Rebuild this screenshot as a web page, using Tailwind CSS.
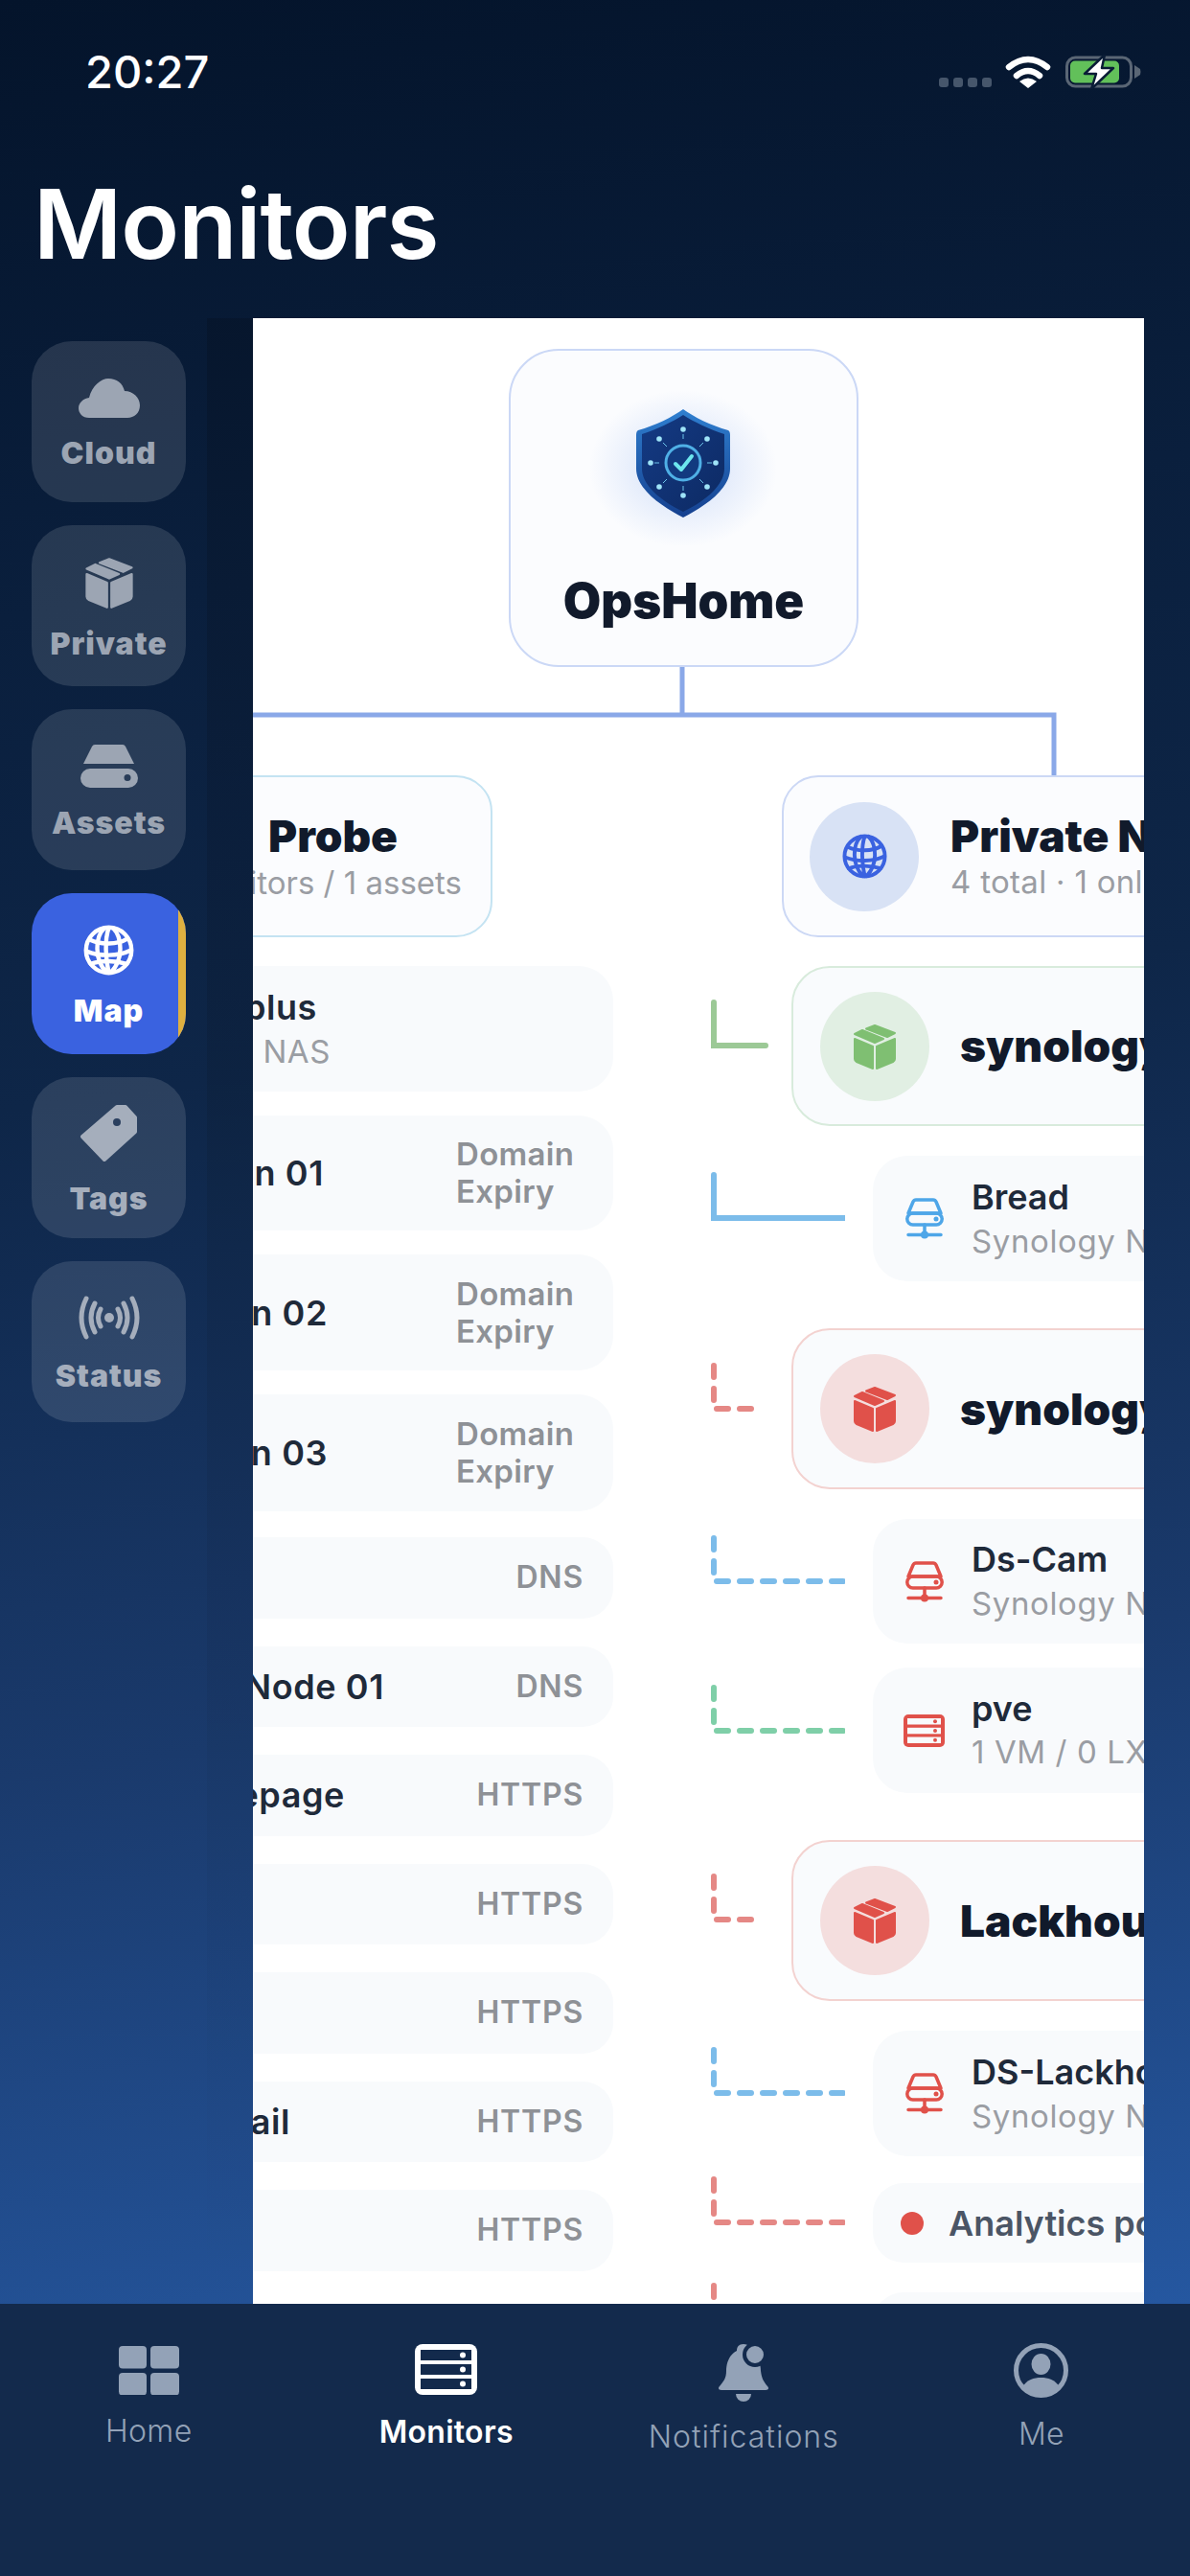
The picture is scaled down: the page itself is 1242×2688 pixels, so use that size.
<!DOCTYPE html>
<html lang="en">
<head>
  <meta charset="UTF-8" />
  <meta name="viewport" content="width=device-width, initial-scale=1.0"/>
  <title>Monitors</title>
  <script src="https://cdn.jsdelivr.net/npm/@tailwindcss/browser@4"></script>
</head>
<body class="w-[1242px] h-[2688px] overflow-hidden flex flex-col bg-[#132a4c] [font-family:Inter,sans-serif]">

  <!-- shared icons -->
  <svg class="hidden">
    <symbol id="box" viewBox="0 0 48 50">
      <g fill="currentColor" stroke="currentColor" stroke-width="2" stroke-linejoin="round">
        <path d="M24 3 L45 11 L37 15 L15 6.5Z"/>
        <path d="M11 8 L33 17 L24 21 L3 12Z"/>
        <path d="M3 17 L22 25 L22 48 L5 41 Q3 40 3 38Z"/>
        <path d="M45 17 L26 25 L26 48 L43 41 Q45 40 45 38Z"/>
      </g>
    </symbol>
    <symbol id="drive" viewBox="0 0 40 43">
      <g fill="none" stroke="currentColor" stroke-width="3.500" stroke-linecap="round" stroke-linejoin="round">
        <path d="M11 2H29Q31 2 32 4L37 16H3L8 4Q9 2 11 2Z"/>
        <rect x="1.800" y="16" width="36.400" height="12" rx="6"/>
        <path d="M20 28V38M3 38.500H37"/>
      </g>
      <circle cx="32" cy="22" r="2.500" fill="currentColor"/>
      <circle cx="20" cy="38.500" r="4" fill="currentColor"/>
    </symbol>
    <symbol id="globe" viewBox="0 0 48 48">
      <g fill="none" stroke="currentColor" stroke-width="4" stroke-linecap="round">
        <circle cx="24" cy="24" r="21.500"/>
        <path d="M20 3C11 11 10 33 22 45M28 3C37 12 38 33 26 45M24 3C20 14 21 33 24 45"/>
        <path d="M6 14C16 19 32 19 42 13M3 25C15 30 33 30 45 24M7 37C17 33 31 34 41 37"/>
      </g>
    </symbol>
    <symbol id="leg-green" viewBox="0 0 60 52"><path d="M3 3V48H57" fill="none" stroke="#9cc996" stroke-width="6" stroke-linecap="round"/></symbol>
    <symbol id="leg-blue" viewBox="0 0 140 52"><path d="M3 3V48H139" fill="none" stroke="#7cbcea" stroke-width="6" stroke-linecap="round"/></symbol>
    <symbol id="leg-red-short" viewBox="0 0 50 52"><path d="M3 3V48H47" fill="none" stroke="#e58885" stroke-width="6" stroke-linecap="round" stroke-dasharray="12 12"/></symbol>
    <symbol id="leg-blue-dash" viewBox="0 0 140 52"><path d="M3 3V48H139" fill="none" stroke="#7cbcea" stroke-width="6" stroke-linecap="round" stroke-dasharray="12 12"/></symbol>
    <symbol id="leg-teal-dash" viewBox="0 0 140 52"><path d="M3 3V48H139" fill="none" stroke="#7fcfa8" stroke-width="6" stroke-linecap="round" stroke-dasharray="12 12"/></symbol>
    <symbol id="leg-red-dash" viewBox="0 0 140 52"><path d="M3 3V48H139" fill="none" stroke="#e58885" stroke-width="6" stroke-linecap="round" stroke-dasharray="12 12"/></symbol>
  </svg>

  <div class="h-[2404px] shrink-0 flex flex-col bg-[linear-gradient(172deg,#04142b_0%,#0a1f3d_25%,#0e2648_45%,#1a3a6c_72%,#2557a0_100%)]">

    <!-- Status bar + title -->
    <header class="h-[332px] shrink-0 relative">
      <div class="flex items-start justify-between pl-[89px] pr-[51px] pt-[46px]">
        <span class="text-[47px] leading-[58px] font-medium text-white">20:27</span>
        <div class="flex items-end pt-[11px]">
          <div class="flex gap-[5px] mb-[1px]">
            <i class="block w-[10px] h-[10px] rounded-[3px] bg-[#46566b]"></i>
            <i class="block w-[10px] h-[10px] rounded-[3px] bg-[#46566b]"></i>
            <i class="block w-[10px] h-[10px] rounded-[3px] bg-[#46566b]"></i>
            <i class="block w-[10px] h-[10px] rounded-[3px] bg-[#46566b]"></i>
          </div>
          <svg class="ml-[14px]" width="48" height="35" viewBox="0 0 48 35">
            <g fill="none" stroke="#fff" stroke-width="6.500" stroke-linecap="round">
              <path d="M4 13Q24 -3 44 13"/>
              <path d="M12 22Q24 12 36 22"/>
            </g>
            <path d="M15 28Q24 21 33 28L24 35Z" fill="#fff"/>
          </svg>
          <svg class="ml-[15px] mb-[-1px]" width="79" height="36" viewBox="0 0 79 36">
            <rect x="1.500" y="3" width="67" height="30" rx="9" fill="none" stroke="#5a6675" stroke-width="3"/>
            <rect x="5" y="6.500" width="51" height="23" rx="5" fill="#62c05a"/>
            <path d="M72 11L78 15Q79 18 78 21L72 25Z" fill="#5a6675"/>
            <path d="M41 0L20 20H32L27 36L50 14H38Z" fill="#fff" stroke="#0a1c36" stroke-width="2.500" stroke-linejoin="round"/>
          </svg>
        </div>
      </div>
      <h1 class="ml-[35px] mt-[74px] text-[100px] leading-[112px] font-semibold tracking-[-1px] text-white">Monitors</h1>
    </header>

    <main class="flex flex-1 min-h-0">
      <!-- Sidebar -->
      <nav class="w-[216px] shrink-0 pl-[33px] pt-6 flex flex-col gap-6 text-[32px] leading-[32px] font-black tracking-[1px]">
        <a class="w-[161px] h-[168px] rounded-[42px] bg-white/12 text-[#9ca5b3] flex flex-col items-center justify-center gap-[21px] pt-1">
          <svg width="64" height="41" viewBox="0 0 64 41"><path fill="currentColor" d="M11 41C4 41 0 36 0 31C0 25 5 21 11 20C14 7 24 0 31 0C40 0 46 5 48 13C57 13 64 20 64 28C64 36 58 41 51 41Z"/></svg>
          Cloud
        </a>
        <a class="w-[161px] h-[168px] rounded-[42px] bg-white/12 text-[#9ca5b3] flex flex-col items-center justify-center gap-[20px] pt-1">
          <svg width="54" height="56"><use href="#box"/></svg>
          Private
        </a>
        <a class="w-[161px] h-[168px] rounded-[42px] bg-white/12 text-[#9ca5b3] flex flex-col items-center justify-center gap-[21px] pt-1">
          <svg width="60" height="45" viewBox="0 0 60 45">
            <path fill="currentColor" d="M15 0H44Q46 0 47 2L56 20H3L12 2Q13 0 15 0Z"/>
            <path fill="currentColor" fill-rule="evenodd" d="M10 25H50A10 10 0 0 1 50 45H10A10 10 0 0 1 10 25ZM49 31A3.500 3.500 0 1 0 49 38A3.500 3.500 0 1 0 49 31Z"/>
          </svg>
          Assets
        </a>
        <a class="relative overflow-hidden w-[161px] h-[168px] rounded-[42px] bg-[#3a62e0] text-white flex flex-col items-center justify-center gap-[21px] pt-1">
          <svg width="53" height="53"><use href="#globe"/></svg>
          Map
          <span class="absolute right-0 inset-y-0 w-2 bg-[#dfb040]"></span>
        </a>
        <a class="w-[161px] h-[168px] rounded-[42px] bg-white/12 text-[#a5aebc] flex flex-col items-center justify-center gap-[23px] pt-1">
          <svg width="59" height="59" viewBox="0 0 59 59">
            <path fill="currentColor" fill-rule="evenodd" stroke="currentColor" stroke-width="4" stroke-linejoin="round" d="M2 33L38 2H47L57 13V28L25 57Z"/>
            <circle cx="38" cy="18" r="4" fill="#2a3f5e"/>
          </svg>
          Tags
        </a>
        <a class="w-[161px] h-[168px] rounded-[42px] bg-white/12 text-[#a5aebc] flex flex-col items-center justify-center gap-[22px] pt-1">
          <svg width="70" height="46" viewBox="0 0 70 46">
            <circle cx="35" cy="23" r="5" fill="currentColor"/>
            <g fill="none" stroke="currentColor" stroke-width="5" stroke-linecap="round">
              <path d="M44 14Q49 23 44 32M50 8Q58 23 50 38M59 3Q69 23 59 43"/>
              <path d="M26 14Q21 23 26 32M20 8Q12 23 20 38M11 3Q1 23 11 43"/>
            </g>
          </svg>
          Status
        </a>
      </nav>

      <div class="w-[48px] shrink-0 bg-linear-to-b from-black/15 to-transparent"></div>

      <!-- Map panel -->
      <section class="w-[930px] shrink-0 bg-white overflow-hidden">
        <div class="ml-[267px] mt-8 w-[365px] h-[332px] rounded-[52px] border-2 border-[#cbd8f6] bg-[#fbfcfe] flex flex-col items-center">
          <svg class="mt-[33px]" width="200" height="170" viewBox="-50 -28 200 170">
            <defs>
              <radialGradient id="glow"><stop offset="0" stop-color="#8fb0f0" stop-opacity=".4"/><stop offset="1" stop-color="#8fb0f0" stop-opacity="0"/></radialGradient>
              <linearGradient id="rim" x1="0" y1="0" x2="0" y2="1"><stop offset="0" stop-color="#2f7fd0"/><stop offset="1" stop-color="#15408f"/></linearGradient>
              <linearGradient id="inner" x1="0" y1="0" x2="1" y2="1"><stop offset="0" stop-color="#143a84"/><stop offset="1" stop-color="#0d2a63"/></linearGradient>
            </defs>
            <ellipse cx="49" cy="62" rx="98" ry="82" fill="url(#glow)"/>
            <path fill="url(#rim)" d="M49 0C38 8 20 17 2 22Q0 23 0 27V62C0 85 30 103 49 113C68 103 98 85 98 62V27Q98 23 96 22C78 17 60 8 49 0Z"/>
            <path fill="url(#inner)" d="M49 6C38 13 22 21 6 26V62C6 82 32 99 49 107C66 99 92 82 92 62V26C76 21 60 13 49 6Z"/>
            <g stroke="#6cc4ea" stroke-width="1">
              <path d="M49 26V31M49 80V85M19 56H24M74 56H79M28 35L32 39M70 35L66 39M28 77L32 73M70 77L66 73"/>
            </g>
            <g fill="#9fe4f8">
              <circle cx="49" cy="21" r="2.800"/><circle cx="49" cy="90" r="2.800"/><circle cx="15" cy="56" r="2.800"/><circle cx="83" cy="56" r="2.800"/>
              <circle cx="24" cy="31" r="2.800"/><circle cx="74" cy="31" r="2.800"/><circle cx="24" cy="81" r="2.800"/><circle cx="74" cy="81" r="2.800"/>
            </g>
            <circle cx="49" cy="56" r="18" fill="#123a80" stroke="#4fb0e6" stroke-width="3"/>
            <path d="M41 57L47 63L58 49" fill="none" stroke="#6ce6ee" stroke-width="4" stroke-linecap="round" stroke-linejoin="round"/>
          </svg>
          <span class="mt-[28px] text-[51px] leading-[60px] font-black text-[#111a2b]">OpsHome</span>
        </div>

        <!-- trunk -->
        <svg class="block" width="930" height="113" viewBox="0 0 930 113">
          <path d="M448 0V50M0 50H836V113" fill="none" stroke="#8aa8e8" stroke-width="5"/>
        </svg>

        <div class="flex">
          <!-- Left branch -->
          <div class="w-[376px] shrink-0">
            <div class="-ml-[264px] w-[514px] h-[169px] rounded-[38px] border-2 border-[#c4e3f2] bg-[#fbfcfe] flex flex-col justify-center text-right">
              <div class="pr-[97px] text-[46px] leading-[54px] font-black text-[#111a2b]">Probe</div>
              <div class="pr-[30px] text-[33px] leading-[44px] text-[#9a9da3]">2 monitors / 1 assets</div>
            </div>

            <div class="-ml-[264px] w-[640px] mt-[30px] flex flex-col gap-[25px]">
              <div class="h-[131px] rounded-[36px] bg-[#f8fafc] flex flex-col justify-center">
                <div class="w-[331px] text-right text-[36px] leading-[46px] font-semibold tracking-[0.6px] text-[#1f2a3a]">DS220plus</div>
                <div class="w-[345px] text-right text-[33px] leading-[46px] tracking-[0.6px] text-[#9a9da3]">Synology NAS</div>
              </div>
              <div class="h-[120px] rounded-[36px] bg-[#f8fafc] flex items-center justify-between pr-[32px]">
                <span class="w-[338px] text-right text-[36px] font-semibold tracking-[0.6px] text-[#1f2a3a]">Domain 01</span>
                <span class="w-[132px] text-[33px] leading-[39px] font-semibold tracking-[0.3px] text-[#8e9196]">Domain Expiry</span>
              </div>
              <div class="h-[121px] rounded-[36px] bg-[#f8fafc] flex items-center justify-between pr-[32px]">
                <span class="w-[342px] text-right text-[36px] font-semibold tracking-[0.6px] text-[#1f2a3a]">Domain 02</span>
                <span class="w-[132px] text-[33px] leading-[39px] font-semibold tracking-[0.3px] text-[#8e9196]">Domain Expiry</span>
              </div>
              <div class="h-[122px] rounded-[36px] bg-[#f8fafc] flex items-center justify-between pr-[32px]">
                <span class="w-[342px] text-right text-[36px] font-semibold tracking-[0.6px] text-[#1f2a3a]">Domain 03</span>
                <span class="w-[132px] text-[33px] leading-[39px] font-semibold tracking-[0.3px] text-[#8e9196]">Domain Expiry</span>
              </div>
            </div>

            <div class="-ml-[264px] w-[640px] mt-[27px] flex flex-col gap-[29px] text-[32px] font-semibold text-[#8e9196]">
              <div class="h-[84.500px] rounded-[32px] bg-[#f8fafc] flex items-center justify-end pr-[31px] tracking-[0.8px]">DNS</div>
              <div class="h-[84.500px] rounded-[32px] bg-[#f8fafc] flex items-center justify-between pr-[31px] tracking-[0.8px]">
                <span class="w-[401px] text-right text-[36px] text-[#1f2a3a] tracking-[0.6px]">Probe Node 01</span>DNS
              </div>
              <div class="h-[84.500px] rounded-[32px] bg-[#f8fafc] flex items-center justify-between pr-[31px] tracking-[0.8px]">
                <span class="w-[360px] text-right text-[36px] text-[#1f2a3a] tracking-[0.6px]">Homepage</span>HTTPS
              </div>
              <div class="h-[84.500px] rounded-[32px] bg-[#f8fafc] flex items-center justify-end pr-[31px] tracking-[0.8px]">HTTPS</div>
              <div class="h-[84.500px] rounded-[32px] bg-[#f8fafc] flex items-center justify-end pr-[31px] tracking-[0.8px]">HTTPS</div>
              <div class="h-[84.500px] rounded-[32px] bg-[#f8fafc] flex items-center justify-between pr-[31px] tracking-[0.8px]">
                <span class="w-[303px] text-right text-[36px] text-[#1f2a3a] tracking-[0.6px]">Mail</span>HTTPS
              </div>
              <div class="h-[84.500px] rounded-[32px] bg-[#f8fafc] flex items-center justify-end pr-[31px] tracking-[0.8px]">HTTPS</div>
            </div>
          </div>

          <!-- Right branch -->
          <div class="flex-1 min-w-0">
            <div class="ml-[176px] w-[600px] h-[169px] rounded-[38px] border-2 border-[#ccd8f5] bg-[#fbfcfe] flex items-center pl-[27px]">
              <span class="w-[114px] h-[114px] rounded-full bg-[#d8e2f5] text-[#3a62e0] flex items-center justify-center">
                <svg width="47" height="47"><use href="#globe"/></svg>
              </span>
              <div class="ml-[33px] whitespace-nowrap">
                <div class="text-[46px] leading-[52px] font-black text-[#111a2b]">Private Network</div>
                <div class="text-[33px] leading-[44px] tracking-[0.3px] text-[#9a9da3]">4 total · 1 online</div>
              </div>
            </div>

            <div class="ml-[102px] mt-[30px] flex flex-col whitespace-nowrap">
              <div class="flex items-start">
                <svg class="mt-[35px] w-[84px] shrink-0" height="52"><use href="#leg-green" width="60" height="52"/></svg>
                <div class="w-[520px] shrink-0 h-[167px] rounded-[40px] border-2 border-[#d8ebdc] bg-[#f9fbfd] flex items-center pl-[28px]">
                  <span class="w-[114px] h-[114px] rounded-full bg-[#e1efe3] text-[#7fbf72] flex items-center justify-center"><svg width="48" height="50"><use href="#box"/></svg></span>
                  <span class="ml-[32px] text-[46px] font-black text-[#111a2b]">synology-01</span>
                </div>
              </div>

              <div class="flex items-start mt-[31px]">
                <svg class="mt-[17px] w-[169px] shrink-0" height="52"><use href="#leg-blue" width="140" height="52"/></svg>
                <div class="w-[440px] shrink-0 h-[131px] rounded-[36px] bg-[#f8fafc] flex items-center pl-[34px]">
                  <svg class="text-[#4ea6e8]" width="40" height="43"><use href="#drive"/></svg>
                  <div class="ml-[29px]">
                    <div class="text-[36px] leading-[46px] font-semibold text-[#1f2a3a]">Bread</div>
                    <div class="text-[33px] leading-[46px] tracking-[0.6px] text-[#9a9da3]">Synology NAS</div>
                  </div>
                </div>
              </div>

              <div class="flex items-start mt-[49px]">
                <svg class="mt-[36px] w-[84px] shrink-0" height="52"><use href="#leg-red-short" width="50" height="52"/></svg>
                <div class="w-[520px] shrink-0 h-[168px] rounded-[40px] border-2 border-[#f3d2d0] bg-[#f9fbfd] flex items-center pl-[28px]">
                  <span class="w-[114px] h-[114px] rounded-full bg-[#f4dede] text-[#e0514a] flex items-center justify-center"><svg width="48" height="50"><use href="#box"/></svg></span>
                  <span class="ml-[32px] text-[46px] font-black text-[#111a2b]">synology-02</span>
                </div>
              </div>

              <div class="flex items-start mt-[31px]">
                <svg class="mt-[17px] w-[169px] shrink-0" height="52"><use href="#leg-blue-dash" width="140" height="52"/></svg>
                <div class="w-[440px] shrink-0 h-[130px] rounded-[36px] bg-[#f8fafc] flex items-center pl-[34px]">
                  <svg class="text-[#e0514a]" width="40" height="43"><use href="#drive"/></svg>
                  <div class="ml-[29px]">
                    <div class="text-[36px] leading-[46px] font-semibold text-[#1f2a3a]">Ds-Cam</div>
                    <div class="text-[33px] leading-[46px] tracking-[0.6px] text-[#9a9da3]">Synology NAS</div>
                  </div>
                </div>
              </div>

              <div class="flex items-start mt-[25px]">
                <svg class="mt-[18px] w-[169px] shrink-0" height="52"><use href="#leg-teal-dash" width="140" height="52"/></svg>
                <div class="w-[440px] shrink-0 h-[131px] rounded-[36px] bg-[#f8fafc] flex items-center pl-[32px]">
                  <svg width="43" height="34" viewBox="0 0 43 34">
                    <rect width="43" height="34" rx="5" fill="#e0514a"/>
                    <rect x="4" y="4" width="35" height="6.500" fill="#f8fafc"/><rect x="4" y="13.800" width="35" height="6.500" fill="#f8fafc"/><rect x="4" y="23.500" width="35" height="6.500" fill="#f8fafc"/>
                    <circle cx="33" cy="7.200" r="2" fill="#e0514a"/><circle cx="33" cy="17" r="2" fill="#e0514a"/><circle cx="33" cy="26.800" r="2" fill="#e0514a"/>
                  </svg>
                  <div class="ml-[28px]">
                    <div class="text-[36px] leading-[44px] font-semibold text-[#1f2a3a]">pve</div>
                    <div class="text-[33px] leading-[46px] tracking-[0.6px] text-[#9a9da3]">1 VM / 0 LXC</div>
                  </div>
                </div>
              </div>

              <div class="flex items-start mt-[49px]">
                <svg class="mt-[35px] w-[84px] shrink-0" height="52"><use href="#leg-red-short" width="50" height="52"/></svg>
                <div class="w-[520px] shrink-0 h-[168px] rounded-[40px] border-2 border-[#f3d2d0] bg-[#f9fbfd] flex items-center pl-[28px]">
                  <span class="w-[114px] h-[114px] rounded-full bg-[#f4dede] text-[#e0514a] flex items-center justify-center"><svg width="48" height="50"><use href="#box"/></svg></span>
                  <span class="ml-[32px] text-[46px] font-black text-[#111a2b]">Lackhouse</span>
                </div>
              </div>

              <div class="flex items-start mt-[31px]">
                <svg class="mt-[17px] w-[169px] shrink-0" height="52"><use href="#leg-blue-dash" width="140" height="52"/></svg>
                <div class="w-[440px] shrink-0 h-[131px] rounded-[36px] bg-[#f8fafc] flex items-center pl-[34px]">
                  <svg class="text-[#e0514a]" width="40" height="43"><use href="#drive"/></svg>
                  <div class="ml-[29px]">
                    <div class="text-[36px] leading-[46px] font-semibold text-[#1f2a3a]">DS-Lackhouse</div>
                    <div class="text-[33px] leading-[46px] tracking-[0.6px] text-[#9a9da3]">Synology NAS</div>
                  </div>
                </div>
              </div>

              <div class="flex items-start mt-[28px]">
                <svg class="mt-[-7px] w-[169px] shrink-0" height="52"><use href="#leg-red-dash" width="140" height="52"/></svg>
                <div class="w-[440px] shrink-0 h-[83px] rounded-[32px] bg-[#f8fafc] flex items-center pl-[29px]">
                  <span class="w-6 h-6 rounded-full bg-[#e0514a]"></span>
                  <span class="ml-[26px] text-[36px] font-semibold text-[#4b5565]">Analytics portal</span>
                </div>
              </div>

              <div class="flex items-start mt-[31px]">
                <svg class="mt-[-10px] w-[169px] shrink-0" height="52"><use href="#leg-red-dash" width="140" height="52"/></svg>
                <div class="w-[440px] shrink-0 h-[83px] rounded-[32px] bg-[#f8fafc]"></div>
              </div>
            </div>
          </div>
        </div>
      </section>

      <div class="w-[48px] shrink-0"></div>
    </main>
  </div>

  <!-- Tab bar -->
  <footer class="h-[284px] shrink-0 grid grid-cols-4 text-[32px] leading-[38px] text-[#93a2b7]">
    <a class="flex flex-col items-center pt-[44px]">
      <svg width="63" height="51" viewBox="0 0 63 51" fill="currentColor">
        <rect width="29" height="23.500" rx="4"/><rect x="33" width="30" height="23.500" rx="4"/>
        <rect y="28" width="29" height="23.500" rx="4"/><rect x="33" y="28" width="30" height="23.500" rx="4"/>
      </svg>
      <span class="mt-[19px] font-light tracking-[0.4px]">Home</span>
    </a>
    <a class="flex flex-col items-center pt-[42px] text-white">
      <svg width="65" height="53" viewBox="0 0 65 53">
        <rect width="65" height="53" rx="8" fill="#fff"/>
        <rect x="6" y="6" width="53" height="11" fill="#132a4c"/><rect x="6" y="21" width="53" height="11" fill="#132a4c"/><rect x="6" y="36" width="53" height="11" fill="#132a4c"/>
        <circle cx="50" cy="11.500" r="3" fill="#fff"/><circle cx="50" cy="26.500" r="3" fill="#fff"/><circle cx="50" cy="41.500" r="3" fill="#fff"/>
      </svg>
      <span class="mt-[20px] font-semibold tracking-[0.3px]">Monitors</span>
    </a>
    <a class="flex flex-col items-center pt-[42px]">
      <svg width="54" height="60" viewBox="0 0 54 60">
        <path fill="currentColor" d="M27 0C22 0 20 3 20 7C12 11 9 20 9 28C9 36 6 39 2 44C0 46 1 48 4 48H50C53 48 54 46 52 44C48 39 46 36 45 28C45 20 42 11 34 7C34 3 32 0 27 0Z"/>
        <circle cx="39" cy="11" r="11" fill="currentColor" stroke="#132a4c" stroke-width="4"/>
        <path fill="currentColor" d="M19 52H35A8 8 0 0 1 19 52Z"/>
      </svg>
      <span class="mt-[18px] font-light tracking-[1px]">Notifications</span>
    </a>
    <a class="flex flex-col items-center pt-[41px]">
      <svg width="57" height="57" viewBox="0 0 57 57">
        <circle cx="28.500" cy="28.500" r="26" fill="none" stroke="currentColor" stroke-width="5"/>
        <ellipse cx="28.500" cy="22" rx="10" ry="11" fill="currentColor"/>
        <path fill="currentColor" d="M9 46C14 38 21 36 28.500 36C36 36 43 38 48 46A26 26 0 0 1 9 46Z"/>
      </svg>
      <span class="mt-[19px] font-light">Me</span>
    </a>
  </footer>
</body>
</html>
